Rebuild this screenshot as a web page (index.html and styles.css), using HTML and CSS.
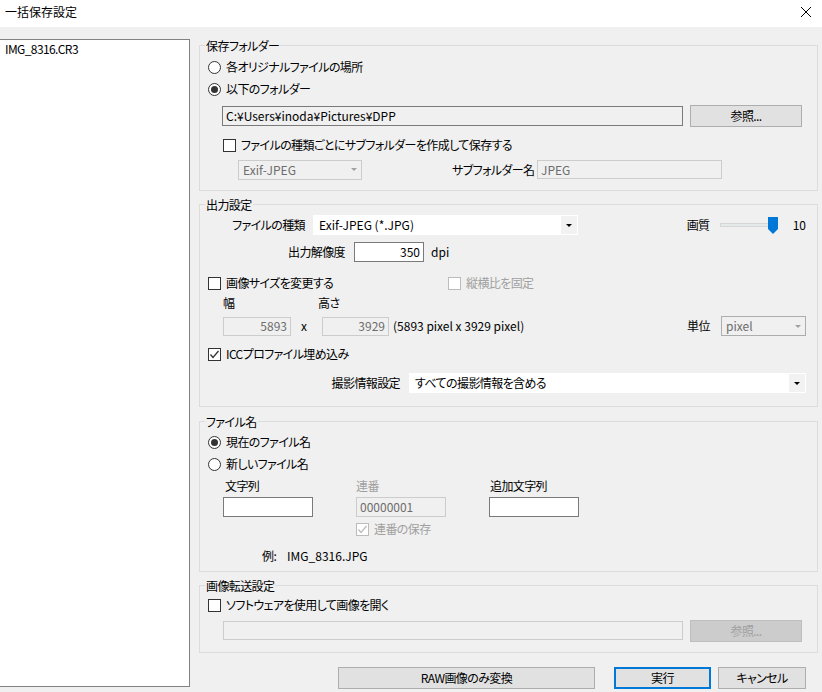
FILE: index.html
```html
<!DOCTYPE html>
<html lang="ja">
<head>
<meta charset="utf-8">
<title>一括保存設定</title>
<link rel="stylesheet" href="styles.css">
</head>
<body>
<div class="titlebar">
  <span class="title">一括保存設定</span>
  <svg class="close" viewBox="0 0 10 10"><path d="M0 0L10 10M10 0L0 10" stroke="#000" stroke-width="1"/></svg>
</div>
<div class="main">
  <div class="filelist"><div class="item">IMG_8316.CR3</div></div>
  <div class="panel">
    <div class="group g1">
      <div class="legend">保存フォルダー</div>
      <div class="row m3"><span class="radio"></span><span class="lbl">各オリジナルファイルの場所</span></div>
      <div class="row"><span class="radio on"></span><span class="lbl">以下のフォルダー</span></div>
      <div class="row m5 ind14">
        <div class="input path latin">C:¥Users¥inoda¥Pictures¥DPP</div>
        <div class="btn browse">参照...</div>
      </div>
      <div class="row m7 ind15"><span class="check"></span><span class="lbl">ファイルの種類ごとにサブフォルダーを作成して保存する</span></div>
      <div class="row h21 m3 ind30">
        <div class="combo dis exif latin"><span>Exif-JPEG</span><span class="arrow gray"></span></div>
        <span class="sublbl">サブフォルダー名</span>
        <div class="input dis jpeg latin">JPEG</div>
      </div>
    </div>

    <div class="group g2">
      <div class="legend">出力設定</div>
      <div class="row m2">
        <span class="rlbl w97">ファイルの種類</span>
        <div class="combo white ftype latin"><span>Exif-JPEG (*.JPG)</span><span class="arrowbox"><span class="arrow"></span></span></div>
        <span class="qlbl">画質</span>
        <div class="slider">
          <div class="track"></div>
          <svg class="thumb" viewBox="0 0 10 17"><path d="M0 0H10V12L5 17L0 12Z" fill="#0078d7"/></svg>
        </div>
        <span class="qval latin">10</span>
      </div>
      <div class="row m5">
        <span class="rlbl w137">出力解像度</span>
        <div class="input dpi latin">350</div>
        <span class="unit latin">dpi</span>
      </div>
      <div class="row m9">
        <div class="citem"><span class="check"></span><span class="lbl">画像サイズを変更する</span></div>
        <span class="check dis"></span><span class="lbl gray">縦横比を固定</span>
      </div>
      <div class="row h18">
        <span class="whlbl">幅</span><span>高さ</span>
      </div>
      <div class="row m3 ind15">
        <div class="input dis num w68 latin">5893</div>
        <span class="xsep latin">x</span>
        <div class="input dis num w67 latin">3929</div>
        <span class="pix latin">(5893 pixel x 3929 pixel)</span>
        <span class="ulbl">単位</span>
        <div class="combo dis2 unitc latin"><span>pixel</span><span class="arrow gray"></span></div>
      </div>
      <div class="row m6"><span class="check on"><svg viewBox="0 0 11 11"><path d="M1.5 5.5L4 8.5L9.5 2" fill="none" stroke="#333" stroke-width="1.3"/></svg></span><span class="lbl">ICCプロファイル埋め込み</span></div>
      <div class="row m7">
        <span class="rlbl w192">撮影情報設定</span>
        <div class="combo white shoot"><span>すべての撮影情報を含める</span><span class="arrowbox"><span class="arrow"></span></span></div>
      </div>
    </div>

    <div class="group g3">
      <div class="legend">ファイル名</div>
      <div class="row m2"><span class="radio on"></span><span class="lbl">現在のファイル名</span></div>
      <div class="row"><span class="radio"></span><span class="lbl">新しいファイル名</span></div>
      <div class="row h18 m2 ind15">
        <span class="col lpad">文字列</span><span class="col gray">連番</span><span class="lpad1">追加文字列</span>
      </div>
      <div class="row h20 m2 ind15">
        <div class="colbox"><div class="input fn"></div></div>
        <div class="colbox"><div class="input dis fn seq latin">00000001</div></div>
        <div class="input fn"></div>
      </div>
      <div class="row h18 m3 ind148"><span class="check dis on"><svg viewBox="0 0 11 11"><path d="M1.5 5.5L4 8.5L9.5 2" fill="none" stroke="#bcbcbc" stroke-width="1.3"/></svg></span><span class="lbl gray">連番の保存</span></div>
      <div class="row h18 m9 ind54"><span class="ex">例:</span><span class="latin">IMG_8316.JPG</span></div>
    </div>

    <div class="group g4">
      <div class="legend">画像転送設定</div>
      <div class="row m1"><span class="check"></span><span class="lbl">ソフトウェアを使用して画像を開く</span></div>
      <div class="row h21 m4 ind15">
        <div class="input dis app"></div>
        <div class="btn disbtn browse">参照...</div>
      </div>
    </div>

    <div class="buttons">
      <div class="btn raw">RAW画像のみ変換</div>
      <div class="btn def">実行</div>
      <div class="btn cancel">キャンセル</div>
    </div>
  </div>
</div>
</body>
</html>
```
FILE: styles.css
```css
* { box-sizing: border-box; margin: 0; padding: 0; }
html, body { width: 822px; height: 692px; overflow: hidden; }
body {
  background: #f0f0f0;
  font-family: "Noto Sans CJK JP", "Noto Sans", sans-serif;
  font-size: 12px;
  line-height: 14px;
  color: #000;
  font-feature-settings: "palt";
  letter-spacing: -0.6px;
}
.latin { letter-spacing: 0; }
.titlebar {
  height: 27px;
  background: #fff;
  display: flex;
  align-items: center;
  justify-content: space-between;
  padding: 0 11px 3px 5px;
}
.title { letter-spacing: 0; }
.close { width: 10px; height: 10px; display: block; }

.main { display: flex; align-items: flex-start; }
.filelist {
  margin-top: 12px;
  margin-left: -1px;
  width: 191px;
  height: 648px;
  background: #fff;
  border: 1px solid #828282;
  padding: 2px 0 0 5px;
}
.panel {
  margin-left: 9px;
  margin-top: 18px;
  width: 619px;
  display: flex;
  flex-direction: column;
}
.group {
  border: 1px solid #dcdcdc;
  padding: 0 11px 0 8px;
}
.g1 { padding-bottom: 10px; }
.g2 { margin-top: 13px; padding-bottom: 12px; }
.g3 { margin-top: 14px; padding-bottom: 6px; }
.g4 { margin-top: 13px; padding-bottom: 11px; }
.legend {
  margin-top: -8px;
  margin-left: -3px;
  width: fit-content;
  padding: 0 1px;
  height: 15px;
  line-height: 15px;
  background: #f0f0f0;
}
.row { display: flex; align-items: center; height: 22px; white-space: nowrap; }
.h21 { height: 21px; }
.h20 { height: 20px; }
.h18 { height: 18px; }
.m1 { margin-top: 1px; }
.m2 { margin-top: 2px; }
.m3 { margin-top: 3px; }
.m4 { margin-top: 4px; }
.m5 { margin-top: 5px; }
.m6 { margin-top: 6px; }
.m7 { margin-top: 7px; }
.m9 { margin-top: 9px; }
.ind14 { padding-left: 14px; }
.ind15 { padding-left: 15px; }
.ind30 { padding-left: 30px; }
.ind54 { padding-left: 54px; }
.ind148 { padding-left: 148px; }

.radio {
  width: 13px; height: 13px;
  border: 1px solid #333;
  border-radius: 50%;
  background: #fff;
  flex: none;
  display: flex; align-items: center; justify-content: center;
}
.radio.on::after {
  content: "";
  width: 7px; height: 7px;
  border-radius: 50%;
  background: #333;
}
.check {
  width: 13px; height: 13px;
  border: 1px solid #333;
  background: #fff;
  flex: none;
  display: flex; align-items: center; justify-content: center;
}
.check svg { width: 11px; height: 11px; display: block; }
.check.dis { border-color: #bcbcbc; }
.lbl { margin-left: 5px; }
.gray { color: #a0a0a0; }

.input {
  height: 20px;
  border: 1px solid #7a7a7a;
  background: #fff;
  padding: 0 3px;
  display: flex;
  align-items: center;
  white-space: nowrap;
  overflow: hidden;
}
.input.dis { border-color: #cccccc; background: #f0f0f0; color: #6d6d6d; }
.input.num { justify-content: flex-end; height: 19px; }
.path { width: 461px; height: 20px; background: #f0f0f0; }
.btn {
  background: #e1e1e1;
  border: 1px solid #adadad;
  display: flex;
  align-items: center;
  justify-content: center;
  height: 22px;
}
.browse { margin-left: 7px; width: 112px; height: 22px; }
.disbtn { background: #cccccc; border-color: #bfbfbf; color: #a0a0a0; }

.combo {
  display: flex;
  align-items: center;
  justify-content: space-between;
  height: 20px;
  padding: 0 4px;
}
.combo.dis { border: 1px solid #cccccc; color: #6d6d6d; }
.combo.dis2 { border: 1px solid #adadad; color: #6d6d6d; }
.combo.white { background: #fff; border: 1px solid #fff; padding: 0 0 0 5px; }
.arrowbox {
  width: 16px; height: 100%;
  background: #f2f2f2;
  display: flex; align-items: center; justify-content: center;
}
.arrow {
  width: 0; height: 0;
  border-left: 3px solid transparent;
  border-right: 3px solid transparent;
  border-top: 3px solid #000;
}
.arrow.gray { border-top-color: #a0a0a0; }
.exif { width: 124px; }
.sublbl { width: 85px; margin-left: 90px; flex: none; }
.jpeg { width: 185px; height: 19px; color: #6d6d6d; }

.rlbl { text-align: right; flex: none; }
.w97 { width: 97px; }
.w137 { width: 137px; }
.w192 { width: 192px; }
.ftype { width: 265px; margin-left: 8px; }
.qlbl { margin-left: 109px; width: 33px; }
.slider { position: relative; width: 57px; height: 17px; display: flex; align-items: center; }
.track { width: 57px; height: 4px; background: #e7eaea; border: 1px solid #d6d6d6; }
.thumb { position: absolute; left: 48px; top: 0; width: 10px; height: 17px; }
.qval { margin-left: 16px; }
.dpi { width: 70px; margin-left: 9px; justify-content: flex-end; }
.unit { margin-left: 7px; }
.citem { width: 240px; display: flex; align-items: center; }
.whlbl { margin-left: 15px; width: 95px; }
.w68 { width: 68px; }
.w67 { width: 67px; }
.xsep { width: 31px; padding-left: 10px; }
.pix { margin-left: 4px; }
.ulbl { margin-left: auto; width: 34px; }
.unitc { width: 85px; }
.shoot { width: 397px; margin-left: 9px; }

.col { width: 133px; }
.lpad { padding-left: 2px; }
.lpad1 { padding-left: 1px; }
.colbox { width: 133px; }
.fn { width: 90px; height: 20px; }
.ex { width: 25px; }
.app { width: 460px; height: 19px; }

.buttons {
  margin-top: 14px;
  display: flex;
  justify-content: flex-end;
  padding-right: 12px;
}
.raw { width: 257px; }
.def { width: 97px; margin-left: 19px; border: 2px solid #0078d7; }
.cancel { width: 88px; margin-left: 7px; }
```
